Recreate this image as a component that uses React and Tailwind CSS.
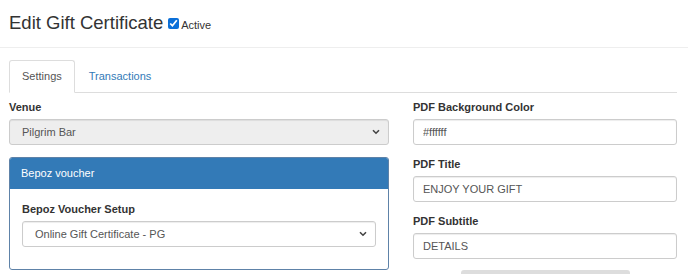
import React from "react";

function Chevron() {
  return (
    <svg width="8" height="6" viewBox="0 0 8 6" className="shrink-0">
      <path d="M1 1.2l3 3 3-3" fill="none" stroke="#444" strokeWidth="1.6" />
    </svg>
  );
}

function FakeSelect({ value, disabled }) {
  return (
    <div
      className={`flex items-center justify-between h-[26px] border border-[#ccc] rounded-[3px] pl-[12px] pr-[8px] text-[11px] text-[#555] shadow-[inset_0_1px_1px_rgba(0,0,0,0.075)] ${
        disabled ? "bg-[#eee]" : "bg-white"
      }`}
    >
      <span>{value}</span>
      <Chevron />
    </div>
  );
}

function Field({ label, value }) {
  return (
    <div>
      <label className="block h-[15px] leading-[15px] mb-[4px] text-[11px] font-bold text-[#333]">
        {label}
      </label>
      <input
        type="text"
        readOnly
        value={value}
        className="block w-full h-[26px] border border-[#ccc] rounded-[3px] px-[9px] text-[11px] text-[#555] bg-white outline-none shadow-[inset_0_1px_1px_rgba(0,0,0,0.075)]"
      />
    </div>
  );
}

export default function App() {
  return (
    <div className="w-[688px] h-[274px] overflow-hidden bg-white text-[#333] font-['Liberation_Sans',Arial,sans-serif]">
      {/* page header */}
      <div className="h-[48px] border-b border-[#eee] pl-[9px] pt-[11px]">
        <div className="flex items-baseline">
          <h1 className="text-[18.5px] leading-[24px] font-normal text-[#333]">
            Edit Gift Certificate
          </h1>
          <label className="flex items-baseline ml-[5px] text-[11px]">
            <input
              type="checkbox"
              defaultChecked
              className="w-[11px] h-[11px] m-0 mr-[2px] accent-[#0b6fd8]"
            />
            <span>Active</span>
          </label>
        </div>
      </div>

      <div className="pl-[9px] pr-[11px] pt-[12px]">
        {/* tabs */}
        <ul className="flex border-b border-[#ddd] text-[11px]">
          <li className="-mb-px">
            <span className="flex items-center h-[33px] px-[12px] border border-[#ddd] border-b-white rounded-t-[3px] bg-white text-[#555]">
              Settings
            </span>
          </li>
          <li className="ml-[2px]">
            <span className="flex items-center h-[32px] px-[12px] text-[#337ab7]">
              Transactions
            </span>
          </li>
        </ul>

        {/* tab content */}
        <div className="flex gap-[24px] pt-[7px]">
          <div className="w-[380px]">
            <label className="block h-[15px] leading-[15px] mb-[4px] text-[11px] font-bold">
              Venue
            </label>
            <FakeSelect value="Pilgrim Bar" disabled />

            <div className="mt-[12px] border border-[#5e82a8] rounded-[3px] overflow-hidden">
              <div className="h-[31px] bg-[#337ab7] px-[11px] flex items-center text-[11px] text-white">
                Bepoz voucher
              </div>
              <div className="px-[12px] pt-[13px] pb-[22px]">
                <label className="block h-[15px] leading-[15px] mb-[4px] text-[11px] font-bold">
                  Bepoz Voucher Setup
                </label>
                <FakeSelect value="Online Gift Certificate - PG" />
              </div>
            </div>
          </div>

          <div className="w-[264px] flex flex-col gap-[12px]">
            <Field label="PDF Background Color" value="#ffffff" />
            <Field label="PDF Title" value="ENJOY YOUR GIFT" />
            <Field label="PDF Subtitle" value="DETAILS" />
            <div className="flex justify-center">
              <div className="w-[169px] h-[26px] -mt-[1px] rounded-[3px] bg-[#ddd]" />
            </div>
          </div>
        </div>
      </div>
    </div>
  );
}
